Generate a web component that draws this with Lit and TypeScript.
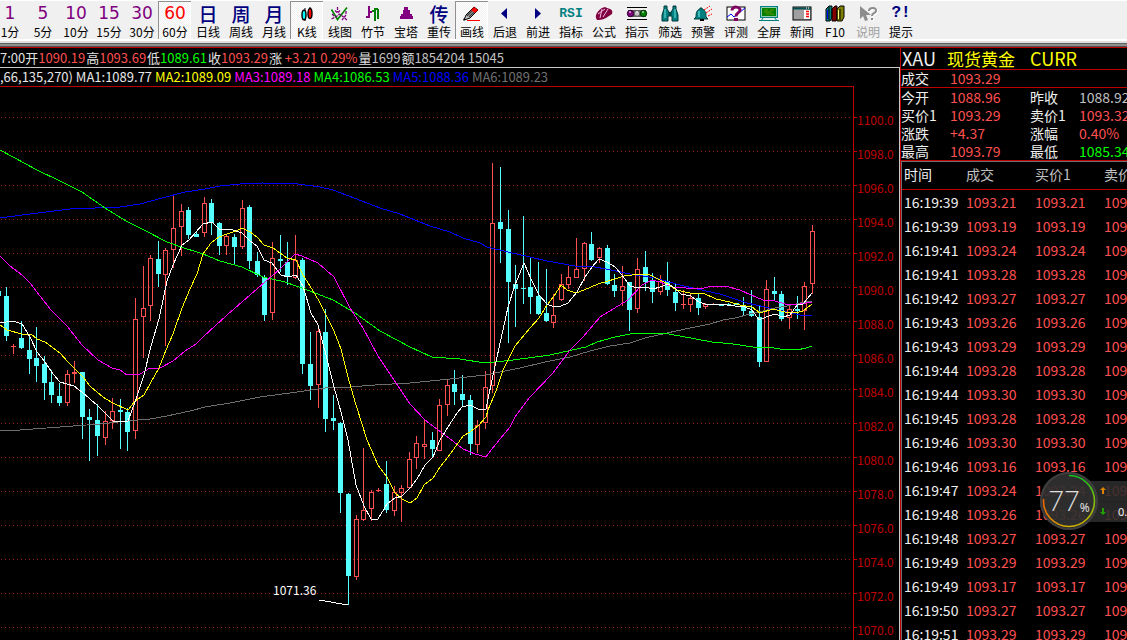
import { LitElement, html, svg, css } from "lit";
import { customElement } from "lit/decorators.js";
import { classMap } from "lit/directives/class-map.js";

type Glyph = { text: string; tone: string } | { icon: string };
interface Tool {
  label: string;
  glyph: Glyph;
  pressed?: boolean;
  disabled?: boolean;
}

const num = (text: string, label: string, pressed = false): Tool => ({
  label,
  glyph: { text, tone: pressed ? "num hot" : "num" },
  pressed,
});
const han = (text: string, label: string): Tool => ({ label, glyph: { text, tone: "han" } });
const pic = (icon: string, label: string, extra: Partial<Tool> = {}): Tool => ({
  label,
  glyph: { icon },
  ...extra,
});

const TOOLS: Tool[] = [
  num("1", "1分"),
  num("5", "5分"),
  num("10", "10分"),
  num("15", "15分"),
  num("30", "30分"),
  num("60", "60分", true),
  han("日", "日线"),
  han("周", "周线"),
  han("月", "月线"),
  pic("candles", "K线", { pressed: true }),
  pic("linechart", "线图"),
  pic("bars", "竹节"),
  pic("tower", "宝塔"),
  han("传", "重传"),
  pic("pencil", "画线", { pressed: true }),
  pic("back", "后退"),
  pic("forward", "前进"),
  { label: "指标", glyph: { text: "RSI", tone: "rsi" } },
  pic("formula", "公式"),
  pic("lights", "指示"),
  pic("binoculars", "筛选"),
  pic("bell", "预警"),
  pic("quiz", "评测"),
  pic("screen", "全屏"),
  pic("news", "新闻"),
  pic("books", "F10"),
  pic("help", "说明", { disabled: true }),
  { label: "提示", glyph: { text: "?!", tone: "hint" } },
];

const ICONS: Record<string, unknown> = {
  candles: svg`
    <path d="M10 3v13M15 2v12" stroke="#000"/>
    <ellipse cx="9" cy="10" rx="2" ry="4.800" fill="#00ffff" stroke="#000" stroke-width="1.400"/>
    <ellipse cx="15" cy="8.500" rx="2" ry="5" fill="#ff0000" stroke="#000" stroke-width="1.400"/>`,
  linechart: svg`
    <path d="M3.500 4.500l6 10l9.500-12" fill="none" stroke="#008000" stroke-width="1.600"/>
    <path d="M3.500 14l5-2.500l3-2.500l4 3l3.500 3M9.500 2v5M7 5.500l2.500 2.500l2.500-2.500M4 9l3 3M18 6v4l-4 5" fill="none" stroke="#800080" stroke-width="1.300" stroke-dasharray="3 1"/>`,
  bars: svg`
    <path d="M8 1v12M8 7h3M5 12h3" fill="none" stroke="#800080" stroke-width="2"/>
    <path d="M14 3v13M11 6h3M14 4h3M17 4v10" fill="none" stroke="#008000" stroke-width="2"/>`,
  tower: svg`<path d="M10 2h4v3h2v4h2v2h1v3h-13v-3h1v-2h2v-4h1z" fill="#800080"/>`,
  pencil: svg`
    <path d="M4 15l2-5l8-8l4 3l-8 8z" fill="#c0c0c0" stroke="#000"/>
    <path d="M7 11l7-7M9 12l7-7" stroke="#404040" stroke-width="1.500"/>
    <path d="M14 2l4 3l-3 3l-4-3z" fill="#ff0000"/>
    <path d="M3 15.500l1-2.500l2 2z" fill="#000"/><path d="M7 15.500h13" stroke="#ff0000"/>`,
  back: svg`<path d="M14 3v11l-6-5.500z" fill="#000080"/>`,
  forward: svg`<path d="M9 3v11l6-5.500z" fill="#000080"/>`,
  formula: svg`
    <path d="M4 13c-1-4 3-8 6-10l3-1l2 1c5 1 6 3 5 6l-6 4c-4 2-7 2-9 2z" fill="#800040"/>
    <path d="M6 9l7-5M10 4l-2 9M16 4l-5 8" stroke="#f0c0e0" fill="none"/>`,
  lights: svg`
    <path d="M2 2.500h20M2 14.500h20" stroke="#000"/><path d="M3 5h18v7h-18z" fill="#606060"/>
    <circle cx="5.500" cy="8.500" r="3.200" fill="#800080" stroke="#300030"/><circle cx="12" cy="8.500" r="2.800" fill="#c0c0c0" stroke="#606060"/>
    <circle cx="18.500" cy="8.500" r="3.200" fill="#008000" stroke="#003000"/>
    <path d="M4 7h2M11 7h2M17 7h2" stroke="#fff"/>`,
  binoculars: svg`
    <path d="M6 1h3v3l2 3v3h2v-3l2-3v-3h3v3l2 6v6h-6v-5h-4v5h-6v-6l2-6z" fill="#008080" stroke="#003838"/>
    <path d="M7 4v9M17 4v9" stroke="#70e0e0"/><path d="M11 7h2v3h-2z" fill="#004848"/>`,
  bell: svg`
    <path d="M9 3h2v1c3 1 4 3 4 8l2 2h-14l2-2c0-5 1-7 4-8z" fill="#008080" stroke="#004040"/>
    <path d="M8 6v6" stroke="#80f0f0"/><path d="M9 15h4" stroke="#000" stroke-width="2"/>
    <path d="M13 5l6-4M15 8l6-4M17 11l4-2" stroke="#ff0000" stroke-dasharray="2 1"/>`,
  quiz: svg`
    <rect x="3" y="2" width="18" height="13" fill="#fff" stroke="#000"/>
    <path d="M3 12l4-3l3 3l11-9" fill="none" stroke="#0000ff"/>
    <path d="M8 5.500c0-5 9-4 8 0c0 2-4 2-4 6" fill="none" stroke="#800060" stroke-width="3"/>
    <path d="M10 13h4v3h-4z" fill="#800060"/>`,
  screen: svg`
    <path d="M3 1h18v12h-18z" fill="#008080"/><path d="M4.500 2.500h15v9h-15z" fill="#008000" stroke="#fff" stroke-width=".600"/>
    <path d="M7 5h4M13 5h4M7 7h8M9 9h8" stroke="#609000"/>
    <path d="M6 13l-2 3M18 13l2 3M2 15.500h20" stroke="#008080"/>`,
  news: svg`
    <rect x="3" y="2" width="18" height="13" fill="#a0a0a0" stroke="#000"/><path d="M3 3.500h18" stroke="#005050" stroke-width="2"/>
    <path d="M14 5h6v9h-6z" fill="#fff"/><path d="M16 6.500h3M16 9h3M16 11.500h3" stroke="#ff0000" stroke-width="1.500"/>
    <path d="M16 3h1M18 3h1" stroke="#fff"/>`,
  books: svg`
    <path d="M3 4l3-3h3v12l-2 3h-4z" fill="#008080" stroke="#000"/><path d="M9 4l3-3h2v12l-1 3h-4z" fill="#800000" stroke="#000"/>
    <path d="M14 4l3-3h4v11l-2 4h-5z" fill="#808000" stroke="#000"/><path d="M6 2v13M17 4v11" stroke="#000"/>
    <path d="M4.500 5v9" stroke="#0000ff"/><path d="M15.500 5v9" stroke="#ffff80"/>`,
  help: svg`
    <path d="M4 1v13l3-3l2 5l3-1l-2-5h5z" fill="#8c8c8c"/>
    <path d="M13 6c0-4 8-4 7 0c0 2-4 2-4 5M16 13v2" fill="none" stroke="#fff" stroke-width="2" transform="translate(1 1)"/>
    <path d="M13 6c0-4 8-4 7 0c0 2-4 2-4 5M16 13v2" fill="none" stroke="#8c8c8c" stroke-width="2"/>`,
};

/* Each bar: direction (1 up, 0 down), then high, body top, body bottom, low in plot units. */
const BARS: number[][] = [
  [0,287,296,336,341],[1,344,346,347,354],[0,321,338,348,349],[0,335,350,359,374],[0,327,358,366,382],
  [0,356,364,383,400],[0,370,382,395,403],[0,383,396,403,406],[1,370,374,403,406],[1,361,372,374,383],
  [0,372,372,417,439],[0,409,417,420,461],[0,404,420,436,456],[1,411,421,438,445],[1,398,411,421,429],
  [0,399,410,412,449],[0,408,412,432,451],[1,298,319,431,439],[1,266,308,317,358],[1,255,258,306,321],
  [0,241,259,274,287],[1,248,250,275,346],[1,196,228,250,268],[1,204,211,227,256],[0,207,210,235,239],
  [0,232,234,237,237],[1,197,203,233,237],[0,199,203,223,235],[0,222,223,246,255],[1,234,236,246,255],
  [0,234,237,247,264],[1,200,208,247,249],[0,205,207,261,269],[0,252,261,275,277],[0,275,277,315,321],
  [1,242,258,313,320],[0,235,259,261,272],[0,242,262,277,285],[1,235,260,278,279],[0,258,260,364,374],
  [0,332,364,386,400],[1,326,331,385,408],[0,309,332,419,432],[0,395,418,421,430],[0,422,423,493,513],
  [0,493,494,576,605],[1,515,519,577,580],[1,448,510,520,521],[1,490,492,509,521],[1,488,490,491,492],
  [0,461,484,510,513],[1,486,492,511,516],[1,485,488,493,522],[1,452,459,488,488],[1,436,443,458,469],
  [1,419,444,447,459],[0,432,440,449,458],[1,399,405,451,451],[1,380,385,405,416],[0,370,384,392,405],
  [0,375,394,400,407],[0,395,400,444,455],[1,420,425,445,453],[1,371,387,423,429],[1,163,223,386,393],
  [0,167,222,229,263],[0,210,229,282,343],[0,265,284,289,327],[0,216,288,289,304],[0,258,287,297,314],
  [0,262,296,314,315],[0,269,313,321,322],[1,294,315,323,328],[1,274,284,300,301],[1,266,277,285,289],
  [1,238,269,278,278],[1,242,243,269,281],[0,232,244,260,261],[1,247,248,258,263],[0,245,248,284,285],
  [0,274,285,291,297],[1,266,286,291,306],[0,282,282,310,331],[1,258,269,309,313],[0,251,267,282,291],
  [0,273,281,292,303],[1,275,281,292,295],[0,262,281,290,296],[0,284,292,303,311],[1,290,304,305,309],
  [1,294,298,305,312],[0,293,298,308,315],[1,303,304,307,309],[1,303,304,305,305],[0,304,304,306,306],
  [0,303,304,305,305],[0,303,303,305,305],[0,297,305,311,315],[0,290,311,316,317],[0,306,317,362,367],
  [1,280,289,362,362],[0,277,291,294,300],[0,291,294,319,321],[1,306,309,318,329],[0,296,309,311,319],
  [1,282,286,311,330],[1,225,231,284,294],
];

const LINES: [string, string][] = [
  ["#0000ff", "0,218 22,215 70,209 120,207 140,204 162,198 185,192 205,189 220,186 240,184 262,183 298,184 320,187 333,190 362,201 380,208 400,214 430,226 450,232 463,238 480,243 487,247 508,252 530,257 547,261 575,266 590,266 611,270 630,274 655,278 680,285 697,289 720,294 747,303 765,307 787,312 800,315 812,316"],
  ["#6e6e6e", "0,431 20,430 60,427 100,424 127,421 150,419 167,416 190,411 205,407 230,403 260,397 290,393 325,388 350,387 375,385 410,383 450,379 485,375 520,368 545,362 570,357 590,351 610,346 630,343 645,338 667,333 690,328 710,324 723,320 735,318 750,314 763,311 775,308 787,306 800,303 812,301"],
  ["#00ff00", "0,150 13,157 37,170 60,181 82,192 105,208 126,221 144,230 167,242 181,247 203,254 220,261 242,267 263,277 285,282 310,291 333,300 355,313 380,331 410,347 432,357 460,359 485,363 513,360 550,355 586,347 597,342 615,337 635,333 663,333 680,336 712,342 733,344 746,346 760,348 768,347 780,349 797,350 806,348 812,346"],
  ["#ff00ff", "0,256 10,266 22,275 30,283 40,296 51,310 67,326 82,345 98,360 112,368 120,370 127,375 140,374 150,368 160,368 173,361 185,351 196,344 203,337 227,315 250,295 265,282 280,269 295,254 302,256 318,263 334,277 350,308 363,328 378,356 396,383 410,404 425,420 445,435 463,449 475,454 486,457 491,450 510,427 515,417 530,397 553,373 570,350 583,337 600,317 618,306 628,300 642,285 652,280 660,282 672,287 700,289 712,286 725,286 740,290 751,295 763,300 775,301 785,304 800,304 812,302"],
  ["#ffff00", "0,325 7,330 22,334 31,334 37,339 45,342 60,353 68,362 83,377 90,386 98,393 106,399 113,403 128,410 135,401 144,395 151,382 159,368 166,350 173,334 182,308 190,289 197,274 203,254 211,243 219,237 227,234 236,231 242,228 250,232 257,237 264,245 273,248 280,253 287,258 296,260 303,275 310,286 319,301 326,315 334,331 341,349 348,377 356,405 367,440 371,449 378,465 387,477 395,493 402,499 410,503 417,498 424,485 433,478 440,467 448,457 456,446 463,436 470,432 478,426 486,417 488,410 496,391 503,370 515,346 530,328 539,318 547,305 554,296 561,285 567,290 576,293 584,290 598,284 615,279 624,276 640,274 650,275 660,280 668,284 676,290 690,293 703,293 716,299 730,302 740,305 752,307 760,313 773,309 785,312 795,313 803,311 807,308 812,304"],
  ["#ffffff", "0,323 13,321 22,324 30,337 37,352 45,362 53,374 60,382 74,386 82,392 98,406 106,414 113,421 128,421 135,402 144,375 151,346 159,319 167,281 173,265 182,245 189,240 203,224 212,222 219,229 230,229 242,233 250,241 257,246 264,260 272,263 281,275 288,277 296,275 303,286 311,313 318,325 326,355 334,387 341,412 348,440 356,485 364,506 371,519 378,519 387,504 395,498 402,496 410,488 417,479 425,465 433,457 440,440 448,427 457,413 462,407 470,405 478,409 486,409 492,380 499,348 508,307 515,285 524,263 531,279 539,295 547,304 554,307 561,306 568,303 577,292 585,277 592,267 599,259 607,262 615,267 622,275 630,286 638,288 645,287 653,289 660,287 668,284 675,288 681,294 691,296 699,302 705,304 718,304 735,306 745,307 752,310 759,320 766,317 775,314 783,317 790,315 797,305 803,304 812,293"],
];

const TICKS = Array.from({ length: 16 }, (_, i) => ({ y: 117 + i * 34, label: (1100 - i * 2).toFixed(1) }));

const PRICES: [string, string, string][] = [
  ["7:00开", "1090.19", "up"],
  ["高", "1093.69", "up"],
  ["低", "1089.61", "down"],
  ["收", "1093.29", "up"],
];
const AVERAGES: [string, string][] = [
  [",66,135,270) MA1:1089.77", "c1"],
  ["MA2:1089.09", "c2"],
  ["MA3:1089.18", "c3"],
  ["MA4:1086.53", "c4"],
  ["MA5:1088.36", "c5"],
  ["MA6:1089.23", "c6"],
];

const QUOTES: [string, string, string, string, string, string][] = [
  ["今开", "1088.96", "up", "昨收", "1088.92", "flat"],
  ["买价1", "1093.29", "up", "卖价1", "1093.32", "up"],
  ["涨跌", "+4.37", "up", "涨幅", "0.40%", "up"],
  ["最高", "1093.79", "up", "最低", "1085.34", "down"],
];

const TRADES: [string, string][] = [
  ["16:19:39", "1093.21"], ["16:19:39", "1093.19"], ["16:19:41", "1093.24"], ["16:19:41", "1093.28"],
  ["16:19:42", "1093.27"], ["16:19:43", "1093.26"], ["16:19:43", "1093.29"], ["16:19:44", "1093.28"],
  ["16:19:44", "1093.30"], ["16:19:45", "1093.28"], ["16:19:46", "1093.30"], ["16:19:46", "1093.16"],
  ["16:19:47", "1093.24"], ["16:19:48", "1093.26"], ["16:19:48", "1093.27"], ["16:19:49", "1093.29"],
  ["16:19:49", "1093.17"], ["16:19:50", "1093.27"], ["16:19:51", "1093.29"],
];

@customElement("tool-bar")
class ToolBar extends LitElement {
  static styles = css`
    :host {
      display: block;
      overflow: hidden;
      background: #f0f0f0;
      border-top: 1px solid #fff;
      border-bottom: 2px solid #fff;
    }
    .row {
      display: flex;
      margin-left: -7px;
    }
    .tool {
      flex: none;
      display: flex;
      flex-direction: column;
      align-items: center;
      width: 33px;
      height: 38px;
      margin: 0;
      padding: 3px 0 0;
      border: 0;
      border-left: 1px solid transparent;
      background: none;
      color: #000;
      font: 12px/18px "Noto Sans CJK SC", sans-serif;
      white-space: nowrap;
    }
    .pressed {
      border-left-color: #909090;
      box-shadow: inset 0 1px #909090, inset -1px 0 #fff;
      background: repeating-conic-gradient(#fff 0 25%, #f0f0f0 0 50%) 0 0 / 2px 2px;
    }
    .tool:disabled {
      color: #a0a0a0;
    }
    .face {
      flex: none;
      display: flex;
      align-items: center;
      justify-content: center;
      height: 19px;
    }
    .label {
      flex: none;
    }
    .num {
      font: 17px/19px "DejaVu Sans", sans-serif;
      color: #800080;
    }
    .hot {
      color: #ff0000;
    }
    .han {
      font: 500 19px/19px "Noto Sans CJK SC", sans-serif;
      color: #000080;
    }
    .rsi {
      font: bold 13px/19px "Liberation Mono", monospace;
      color: #008080;
    }
    .hint {
      font: bold 16px/19px "Liberation Mono", monospace;
      color: #000080;
    }
  `;

  render() {
    return html`<nav class="row" aria-label="工具栏">
      ${TOOLS.map(
        (t) => html`<button
          type="button"
          class=${classMap({ tool: true, pressed: !!t.pressed })}
          aria-pressed=${t.pressed ? "true" : "false"}
          ?disabled=${t.disabled}
        >
          ${"icon" in t.glyph
            ? html`<span class="face"><svg width="24" height="18" viewBox="0 0 24 18" aria-hidden="true">${ICONS[t.glyph.icon]}</svg></span>`
            : html`<span class="face ${t.glyph.tone}">${t.glyph.text}</span>`}
          <span class="label">${t.label}</span>
        </button>`
      )}
    </nav>`;
  }
}

@customElement("price-chart")
class PriceChart extends LitElement {
  static styles = css`
    :host {
      display: flex;
      flex-direction: column;
      min-width: 0;
      overflow: hidden;
      color: #e0e0e0;
      font: 13px/19px "Noto Sans CJK SC", sans-serif;
      white-space: nowrap;
    }
    .line {
      display: flex;
      height: 19px;
    }
    .prices {
      gap: 1px;
      border-bottom: 1px solid #c8c8c8;
    }
    .body {
      flex: 1;
      display: flex;
      flex-direction: column;
      min-height: 0;
      border-right: 1px solid #c8c8c8;
    }
    .averages {
      gap: 3px;
      height: 18px;
      line-height: 18px;
    }
    .up { color: #ff5050; }
    .down { color: #00ff00; }
    .flat { color: #c0c0c0; }
    .c1 { color: #e8e8e8; }
    .c2 { color: #ffff00; }
    .c3 { color: #ff00ff; }
    .c4 { color: #00ff00; }
    .c5 { color: #0000ff; }
    .c6 { color: #707070; }
    .plot {
      flex: 1;
      min-height: 0;
      width: 100%;
      display: block;
    }
    .axis {
      fill: #c00000;
      font: 12px "Noto Sans CJK SC", sans-serif;
    }
    .note {
      fill: #fff;
      font: 12px "Noto Sans CJK SC", sans-serif;
    }
  `;

  private bar([up, high, top, bottom, low]: number[], i: number) {
    const x = Math.floor(6.3 + i * 7.604);
    if (!up) {
      return svg`<path d="M${x} ${high}h1v${low - high}h-1z" fill="#54ffff"/>
        <rect x=${x - 2} y=${top} width="5" height=${Math.max(1, bottom - top)} fill="#54ffff"/>`;
    }
    const h = bottom - top - 1;
    return svg`<path d=${`M${x + 0.5} ${high}V${top}M${x + 0.5} ${bottom}V${low}` + (h < 1 ? `M${x - 2} ${top + 0.5}h5` : "")} stroke="#ff5050"/>
      ${h < 1 ? "" : svg`<rect x=${x - 1.5} y=${top + 0.5} width="4" height=${h} fill="none" stroke="#ff5050"/>`}`;
  }

  render() {
    return html`
      <div class="line prices">
        ${PRICES.map(([k, v, tone]) => html`<span>${k}<span class=${tone}>${v}</span></span>`)}
        <span>涨 <span class="up">+3.21 0.29%</span></span>
        <span>量<span class="flat">1699</span></span>
        <span>额<span class="flat">1854204 15045</span></span>
      </div>
      <div class="body">
        <div class="line averages">
          ${AVERAGES.map(([t, c]) => html`<span class=${c}>${t}</span>`)}
        </div>
        <svg class="plot" viewBox="0 86 899 554" preserveAspectRatio="xMaxYMin meet" role="img" aria-label="现货黄金 60分 K线图">
          <g shape-rendering="crispEdges">
            ${TICKS.map(
              (t) => svg`<path d="M1 ${t.y + 0.5}H852" stroke="#a01818" stroke-dasharray="1 3"/>
                <path d="M854 ${t.y + 0.5}h3" stroke="#c00000"/>`
            )}
            <path d="M0 86.5H853.5V640" fill="none" stroke="#c00000"/>
            <rect x="0" y="291" width="1" height="5" fill="#54ffff"/>
            ${BARS.map((b, i) => this.bar(b, i))}
            ${LINES.map(([c, pts]) => svg`<polyline points=${pts} fill="none" stroke=${c}/>`)}
            <path d="M319 600L348 605" stroke="#fff"/>
          </g>
          ${TICKS.map((t) => svg`<text class="axis" x="857" y=${t.y + 8}>${t.label}</text>`)}
          <text class="note" x="273" y="595">1071.36</text>
        </svg>
      </div>
    `;
  }
}

@customElement("quote-panel")
class QuotePanel extends LitElement {
  static styles = css`
    :host {
      display: flex;
      flex-direction: column;
      overflow: hidden;
      border-left: 1px solid #c00000;
      color: #f0f0f0;
      font: 14px/18px "Noto Sans CJK SC", sans-serif;
      white-space: nowrap;
    }
    .title {
      flex: none;
      display: grid;
      grid-template-columns: 45px 83px auto;
      align-items: center;
      height: 21px;
      margin: 0;
      padding-left: 1px;
      border-bottom: 1px solid #c00000;
      font-size: 18px;
      font-weight: 400;
      line-height: 21px;
    }
    .gold {
      color: #ffff00;
      font-size: 17px;
    }
    .code {
      color: #ffff00;
    }
    table {
      flex: none;
      width: 273px;
      table-layout: fixed;
      border-collapse: separate;
      border-spacing: 0;
    }
    th,
    td {
      box-sizing: border-box;
      padding: 0;
      text-align: left;
      font-weight: 400;
    }
    .quotes {
      border-bottom: 1px solid #c00000;
    }
    .quotes td,
    .quotes th {
      height: 18px;
    }
    .quotes .last td,
    .quotes .last th {
      line-height: 17px;
      border-bottom: 1px solid #c00000;
    }
    .k { width: 49px; }
    .v { width: 80px; }
    .trades {
      flex: 1;
      min-height: 0;
      overflow: hidden;
      border-top: 1px solid #707070;
      border-left: 1px solid #707070;
    }
    .trades th,
    .trades td {
      height: 24px;
      padding-left: 2px;
    }
    .trades .head th {
      height: 28px;
      padding-bottom: 3px;
      color: #c0c0c0;
      border-bottom: 1px solid #c00000;
    }
    .trades .head .t {
      color: #f0f0f0;
    }
    .t { width: 62px; }
    .p { width: 69px; }
    .up { color: #ff5050; }
    .down { color: #00ff00; }
    .flat { color: #c0c0c0; }
  `;

  render() {
    return html`
      <h1 class="title"><span>XAU</span><span class="gold">现货黄金</span><span class="code">CURR</span></h1>
      <table class="quotes">
        <colgroup><col class="k" /><col class="v" /><col class="k" /><col /></colgroup>
        <tbody>
          <tr class="last"><th scope="row">成交</th><td class="up">1093.29</td><td></td><td></td></tr>
          ${QUOTES.map(
            ([a, b, bt, c, d, dt]) => html`<tr>
              <th scope="row">${a}</th><td class=${bt}>${b}</td>
              <th scope="row">${c}</th><td class=${dt}>${d}</td>
            </tr>`
          )}
        </tbody>
      </table>
      <div class="trades">
        <table>
          <colgroup><col class="t" /><col class="p" /><col class="p" /><col /></colgroup>
          <thead>
            <tr class="head"><th class="t">时间</th><th>成交</th><th>买价1</th><th>卖价1</th></tr>
          </thead>
          <tbody>
            ${TRADES.map(
              ([t, p]) => html`<tr><td>${t}</td><td class="up">${p}</td><td class="up">${p}</td><td class="up">${p}</td></tr>`
            )}
          </tbody>
        </table>
      </div>
    `;
  }
}

@customElement("speed-gauge")
class SpeedGauge extends LitElement {
  static styles = css`
    :host {
      display: flex;
      align-items: center;
    }
    .dial {
      position: relative;
      z-index: 1;
      display: flex;
      align-items: center;
      justify-content: center;
      width: 58px;
      height: 58px;
      border-radius: 50%;
      background: rgba(48, 48, 48, 0.93);
      box-shadow: inset 0 0 0 2px #3e3e3e;
      color: #e0e0e0;
    }
    .ring {
      position: absolute;
      inset: 0;
    }
    .value {
      font: 300 27px/30px Lato, sans-serif;
    }
    .unit {
      align-self: flex-end;
      padding-bottom: 14px;
      font: 12px/16px "Noto Sans", sans-serif;
    }
    .rates {
      display: grid;
      grid-template-rows: 21px 20px;
      width: 60px;
      margin-left: -9px;
      background: rgba(44, 44, 44, 0.88);
      color: #f0f0f0;
      font: 11px/20px "Noto Sans", sans-serif;
    }
    .rate {
      display: flex;
      align-items: center;
      gap: 12px;
      padding-left: 11px;
    }
    .rate:first-child {
      border-bottom: 1px solid #222;
    }
  `;

  render() {
    return html`
      <div class="dial">
        <svg class="ring" viewBox="0 0 58 58" fill="none" stroke-width="1.6" aria-hidden="true">
          <defs>
            <linearGradient id="r" x1="0" y1="0" x2="0" y2="1"><stop stop-color="#10c020" /><stop offset=".4" stop-color="#70c010" /><stop offset="1" stop-color="#d0b000" /></linearGradient>
            <linearGradient id="l" x1="1" y1="1" x2="0" y2="0"><stop stop-color="#d0b000" /><stop offset="1" stop-color="#f06000" /></linearGradient>
          </defs>
          <path d="M29 3.500A25.500 25.500 0 0 1 29 54.500" stroke="url(#r)" />
          <path d="M29 54.500A25.500 25.500 0 0 1 3.600 27" stroke="url(#l)" />
        </svg>
        <span class="value">77</span><span class="unit">%</span>
      </div>
      <div class="rates">
        <div class="rate"><svg width="6" height="7" viewBox="0 0 6 7" aria-hidden="true"><path d="M3 0l3 3h-2v4h-2v-4h-2z" fill="#e08000" /></svg></div>
        <div class="rate"><svg width="6" height="7" viewBox="0 0 6 7" aria-hidden="true"><path d="M3 7l3-3h-2v-4h-2v4h-2z" fill="#20a000" /></svg>0.1K/s</div>
      </div>
    `;
  }
}

@customElement("app-root")
class AppRoot extends LitElement {
  static styles = css`
    :host {
      position: relative;
      display: flex;
      flex-direction: column;
      height: 100vh;
      overflow: hidden;
      background: #000;
    }
    .rail {
      flex: none;
      height: 6px;
      background: linear-gradient(#e0e0e0 2px, #606060 2px 3px, #909090 3px 5px, #505050 5px);
      border-bottom: 1px solid #c00000;
    }
    .main {
      flex: 1;
      min-height: 0;
      display: grid;
      grid-template-columns: minmax(0, 1fr) 227px;
      grid-template-rows: minmax(0, 1fr);
    }
    .gauge {
      position: absolute;
      right: -22px;
      top: 472px;
    }
  `;

  render() {
    return html`
      <tool-bar></tool-bar>
      <div class="rail"></div>
      <main class="main">
        <price-chart></price-chart>
        <quote-panel></quote-panel>
      </main>
      <speed-gauge class="gauge"></speed-gauge>
    `;
  }
}
